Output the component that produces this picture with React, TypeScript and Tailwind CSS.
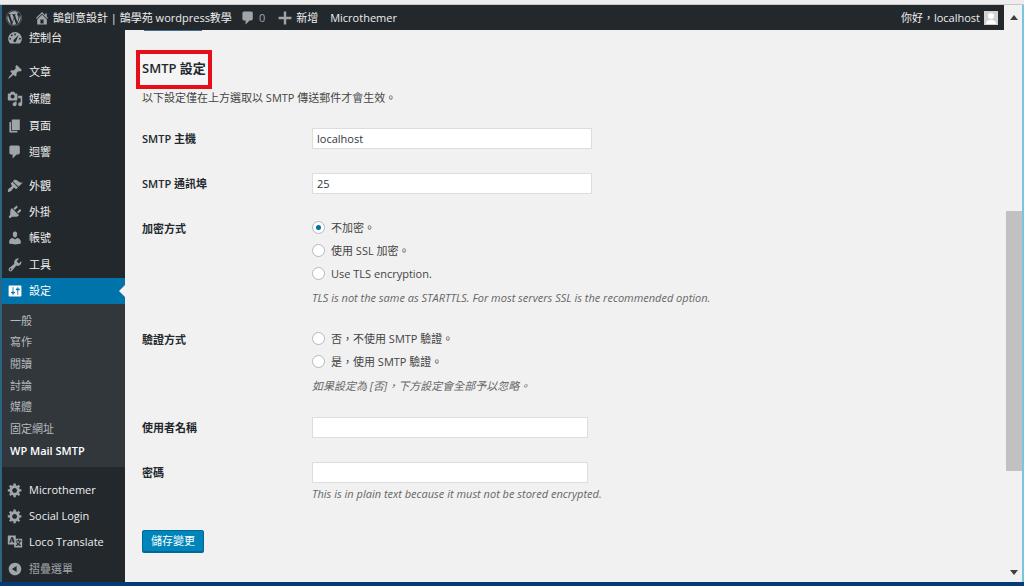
import { useState } from "react";
import type { ReactNode } from "react";
import { FaWordpress } from "react-icons/fa";

/* dashicons, 20x20 grid */
const ICONS = {
  dashboard:
    "M3.8 17h12.4A8.6 8.6 0 0 0 18.6 11 8.6 8.6 0 0 0 1.4 11a8.6 8.6 0 0 0 2.4 6zM9 4.5h2v2H9zM4.6 6.6l1.4-1.4 1.4 1.4L6 8zM3 10h2v2H3zM15 10h2v2h-2zM8.2 12.4l6.4-6-3.4 8a1.8 1.8 0 1 1-3-2z",
  home: "M16 8.5l1.53 1.53-1.06 1.06L10 4.6l-6.47 6.49-1.06-1.06L10 2.5l4 4v-2h2v4zm-6-2.46l6 5.99V18H4v-5.97zM12 17v-5H8v5h4z",
  post: "M10.44 3.02l1.82-1.82 6.36 6.35-1.83 1.82c-1.05-.68-2.48-.57-3.41.36l-.75.75c-.92.93-1.04 2.35-.35 3.41l-1.83 1.82-2.41-2.41-2.8 2.79c-.42.42-3.38 2.71-3.8 2.29s1.86-3.39 2.28-3.81l2.79-2.79L4.1 9.36l1.83-1.82c1.05.69 2.48.57 3.4-.36l.75-.75c.93-.92 1.05-2.35.36-3.41z",
  media:
    "M13 11V4c0-.55-.45-1-1-1h-1.67L9 1H5L3.67 3H2c-.55 0-1 .45-1 1v7c0 .55.45 1 1 1h10c.55 0 1-.45 1-1zM7 4.5c1.38 0 2.5 1.12 2.5 2.5S8.38 9.5 7 9.5 4.5 8.38 4.5 7 5.62 4.5 7 4.5zM14 6h5v10.5c0 1.38-1.12 2.5-2.5 2.5S14 17.88 14 16.5s1.12-2.5 2.5-2.5c.17 0 .34.02.5.05V9h-3V6zm-4 8.05V13h2v3.5c0 1.38-1.12 2.5-2.5 2.5S7 17.88 7 16.5 8.12 14 9.5 14c.17 0 .34.02.5.05z",
  page: "M6 15V2h10v13H6zm-1 1h8v2H3V5h2v11z",
  comments:
    "M5 2h9c1.1 0 2 .9 2 2v7c0 1.1-.9 2-2 2h-2l-5 5v-5H5c-1.1 0-2-.9-2-2V4c0-1.1.9-2 2-2z",
  appearance:
    "M14.48 11.06L7.41 3.99l1.5-1.5c.5-.56 2.3-.47 3.51.32 1.21.8 1.43 1.28 2.91 2.1 1.18.64 2.45 1.26 4.45.85zm-.71.71L6.7 4.7 4.93 6.47c-.39.39-.39 1.02 0 1.41l1.06 1.06c.39.39.39 1.03 0 1.42-.6.6-1.43 1.11-2.21 1.69-.35.26-.7.53-1.01.84C1.43 14.23.4 16.08 1.4 17.07c.99 1 2.84-.03 4.18-1.36.31-.31.58-.66.85-1.02.57-.78 1.08-1.61 1.69-2.21.39-.39 1.02-.39 1.41 0l1.06 1.06c.39.39 1.02.39 1.41 0z",
  plugins:
    "M13.11 4.36L9.87 7.6 8 5.73l3.24-3.24c.35-.34 1.05-.2 1.56.32.52.51.66 1.21.31 1.55zm-8 1.77l.91-1.12 9.01 9.01-1.19.84c-.71.71-2.63 1.16-3.82 1.16H6.14L4.9 17.26c-.59.59-1.54.59-2.12 0-.59-.58-.59-1.53 0-2.12l1.24-1.24v-3.88c0-1.13.4-3.19 1.09-3.89zm7.26 3.97l3.24-3.24c.34-.35 1.04-.21 1.55.31.52.51.66 1.21.31 1.55l-3.24 3.25z",
  users:
    "M10 9.25c-2.27 0-2.73-3.44-2.73-3.44C7 4.02 7.82 2 9.97 2c2.16 0 2.98 2.02 2.71 3.81 0 0-.41 3.44-2.68 3.44zm0 2.57L12.72 10c2.39 0 4.52 2.33 4.52 4.53v2.49s-3.65 1.13-7.24 1.13c-3.65 0-7.24-1.13-7.24-1.13v-2.49c0-2.25 1.94-4.48 4.47-4.48z",
  tools:
    "M16.68 9.77c-1.34 1.34-3.3 1.67-4.95.99l-5.41 6.52c-.99.99-2.59.99-3.58 0s-.99-2.59 0-3.57l6.52-5.42c-.68-1.65-.35-3.61.99-4.95 1.28-1.28 3.12-1.62 4.72-1.06l-2.89 2.89 2.82 2.82 2.86-2.87c.53 1.58.18 3.39-1.08 4.65zM3.81 16.21c.4.39 1.04.39 1.43 0 .4-.4.4-1.04 0-1.43-.39-.4-1.03-.4-1.43 0-.39.39-.39 1.03 0 1.43z",
  settings:
    "M18 16V4c0-.55-.45-1-1-1H3c-.55 0-1 .45-1 1v12c0 .55.45 1 1 1h14c.55 0 1-.45 1-1zM8 11h1c.55 0 1 .45 1 1s-.45 1-1 1H8v1.5c0 .28-.22.5-.5.5s-.5-.22-.5-.5V13H6c-.55 0-1-.45-1-1s.45-1 1-1h1V5.5c0-.28.22-.5.5-.5s.5.22.5.5V11zm5-2h-1c-.55 0-1-.45-1-1s.45-1 1-1h1V5.5c0-.28.22-.5.5-.5s.5.22.5.5V7h1c.55 0 1 .45 1 1s-.45 1-1 1h-1v5.5c0 .28-.22.5-.5.5s-.5-.22-.5-.5V9z",
  generic:
    "M18 12h-2.18c-.17.7-.44 1.35-.81 1.93l1.54 1.54-2.1 2.1-1.54-1.54c-.58.36-1.23.63-1.91.79V19H8v-2.18c-.68-.16-1.33-.43-1.91-.79l-1.54 1.54-2.12-2.12 1.54-1.54c-.36-.58-.63-1.23-.79-1.91H1V9.03h2.17c.16-.7.44-1.35.8-1.94L2.43 5.55l2.1-2.1 1.54 1.54c.58-.37 1.24-.64 1.93-.81V2h3v2.18c.68.16 1.33.43 1.91.79l1.54-1.54 2.12 2.12-1.54 1.54c.36.59.64 1.24.8 1.94H18V12zm-8.5 1.5c1.66 0 3-1.34 3-3s-1.34-3-3-3-3 1.34-3 3 1.34 3 3 3z",
  translate:
    "M1 2h10v4h8v11H9v-4H1zM5.3 4L2.8 11h1.5l.5-1.5h2.4L7.7 11H9V8L7.4 4zM6 6l.8 2.3H5.2zM11 8v1.4h4.6c-.3 1-.8 1.8-1.5 2.5-.5-.5-.9-1-1.2-1.6h-1.5c.4.9 1 1.7 1.7 2.4-.7.5-1.5.9-2.3 1.1l.7 1.3c1-.4 1.9-.9 2.7-1.5.8.6 1.7 1.1 2.7 1.4l.6-1.3c-.8-.2-1.6-.6-2.3-1.1.9-1 1.5-2.1 1.8-3.200H18V8h-2.700V7h-1.500v1z",
  collapse:
    "M10 2.16c4.33 0 7.84 3.51 7.84 7.84s-3.51 7.84-7.84 7.84S2.16 14.33 2.16 10 5.71 2.16 10 2.16zm2 11.72V6.12L6.18 9.97z",
  plus: "M8.5 2h3v6.5H18v3h-6.5V18h-3v-6.5H2v-3h6.5z",
};

type IconName = keyof typeof ICONS;
type Item = { icon: IconName; label: string };

const CONTENT: Item[] = [
  { icon: "post", label: "文章" },
  { icon: "media", label: "媒體" },
  { icon: "page", label: "頁面" },
  { icon: "comments", label: "迴響" },
];

const ADMIN: Item[] = [
  { icon: "appearance", label: "外觀" },
  { icon: "plugins", label: "外掛" },
  { icon: "users", label: "帳號" },
  { icon: "tools", label: "工具" },
  { icon: "settings", label: "設定" },
];

const EXTRA: Item[] = [
  { icon: "generic", label: "Microthemer" },
  { icon: "generic", label: "Social Login" },
  { icon: "translate", label: "Loco Translate" },
];

const SUBMENU = ["一般", "寫作", "閱讀", "討論", "媒體", "固定網址", "WP Mail SMTP"];

function Icon({ name, className = "" }: { name: IconName; className?: string }) {
  return (
    <svg
      viewBox="0 0 20 20"
      fill="currentColor"
      fillRule="evenodd"
      aria-hidden="true"
      className={`size-4 shrink-0 ${className}`}
    >
      <path d={ICONS[name]} />
    </svg>
  );
}

function MenuItem({ icon, label }: Item) {
  const current = label === "設定";
  return (
    <li className="flex flex-1">
      <a
        href="#"
        aria-current={current ? "page" : undefined}
        className={`relative flex flex-1 items-center gap-[6px] pl-[5px] ${
          current ? "bg-[#0073aa] text-white" : "text-[#eeeeee]"
        }`}
      >
        <Icon name={icon} className={current ? "text-white" : "text-[#a0a5aa]"} />
        {label}
        {current && (
          <span className="absolute right-0 top-1/2 -translate-y-1/2 border-y-[6px] border-r-[6px] border-y-transparent border-r-[#f1f1f1]" />
        )}
      </a>
    </li>
  );
}

function Sidebar() {
  return (
    <nav className="flex w-[123px] shrink-0 flex-col bg-[#23282d]">
      <ul className="mb-[14px] flex h-[15px]">
        <MenuItem icon="dashboard" label="控制台" />
      </ul>
      <ul className="flex h-[107px] flex-col">
        {CONTENT.map((item) => (
          <MenuItem key={item.label} {...item} />
        ))}
      </ul>
      <ul className="mt-[7px] flex h-[132px] flex-col">
        {ADMIN.map((item) => (
          <MenuItem key={item.label} {...item} />
        ))}
      </ul>
      <ul className="flex h-[164px] flex-col bg-[#32373c] py-[6px]">
        {SUBMENU.map((label) => (
          <li key={label} className="flex flex-1">
            <a
              href="#"
              className={`flex flex-1 items-center pl-2 ${
                label === "WP Mail SMTP" ? "font-semibold text-white" : "text-[#b4b9be]"
              }`}
            >
              {label}
            </a>
          </li>
        ))}
      </ul>
      <ul className="mt-[9px] flex h-[106px] flex-col">
        {EXTRA.map((item) => (
          <MenuItem key={item.label} {...item} />
        ))}
        <li className="flex flex-1">
          <button type="button" className="flex flex-1 items-center gap-[6px] pl-[5px] text-[#a0a5aa]">
            <Icon name="collapse" />
            摺疊選單
          </button>
        </li>
      </ul>
    </nav>
  );
}

function AdminBar() {
  return (
    <header className="flex h-[25px] shrink-0 items-center bg-[#23282d] pl-1 pr-[6px] text-[#eeeeee]">
      <a href="#" aria-label="WordPress" className="text-[#a0a5aa]">
        <FaWordpress className="size-4" />
      </a>
      <a href="#" className="ml-3 flex items-center gap-[3px]">
        <Icon name="home" className="text-[#a0a5aa]" />
        鵠創意設計 | 鵠學苑 wordpress教學
      </a>
      <a href="#" className="ml-2 flex items-center gap-[3px] text-[#a0a5aa]">
        <Icon name="comments" />0
      </a>
      <a href="#" className="ml-3 flex items-center gap-[3px]">
        <Icon name="plus" className="text-[#a0a5aa]" />
        新增
      </a>
      <a href="#" className="ml-3">
        Microthemer
      </a>
      <a href="#" className="ml-auto flex items-center gap-1">
        你好，localhost
        <svg viewBox="0 0 14 14" aria-hidden="true" className="size-[14px]">
          <rect width="14" height="14" fill="#d2d2d2" />
          <circle cx="7" cy="5" r="3" fill="#fff" />
          <path d="M2 13c0-3 2-4 5-4s5 1 5 4z" fill="#fff" />
        </svg>
      </a>
    </header>
  );
}

function Row({ label, htmlFor, children }: { label: string; htmlFor?: string; children: ReactNode }) {
  const labelClass = "w-[170px] shrink-0 leading-[25px] font-semibold text-[#23282d]";
  return (
    <div className="flex" role={htmlFor ? undefined : "radiogroup"} aria-label={htmlFor ? undefined : label}>
      {htmlFor ? (
        <label htmlFor={htmlFor} className={labelClass}>
          {label}
        </label>
      ) : (
        <span className={labelClass}>{label}</span>
      )}
      <div className="min-w-0 flex-1">{children}</div>
    </div>
  );
}

function TextField({ id, value, className }: { id: string; value: string; className: string }) {
  return (
    <div className="flex h-[25px] items-center">
      <input
        id={id}
        type="text"
        defaultValue={value}
        className={`h-[21px] border border-[#dddddd] bg-white px-1 text-[#32373c] outline-none ${className}`}
      />
    </div>
  );
}

function RadioList({ name, options, initial }: { name: string; options: string[]; initial?: string }) {
  const [picked, setPicked] = useState(initial);
  return (
    <>
      {options.map((option) => (
        <label key={option} className="flex h-[23px] items-center gap-[6px]">
          <input
            type="radio"
            name={name}
            checked={picked === option}
            onChange={() => setPicked(option)}
            className="grid size-[13px] shrink-0 appearance-none place-items-center rounded-full border border-[#b4b9be] bg-white checked:before:size-[5px] checked:before:rounded-full checked:before:bg-[#00709e] checked:before:content-['']"
          />
          {option}
        </label>
      ))}
    </>
  );
}

function Hint({ children }: { children: ReactNode }) {
  return <p className="leading-[18px] italic text-[#666666]">{children}</p>;
}

function SettingsForm() {
  return (
    <main className="min-w-0 flex-1 bg-[#f1f1f1] pl-[11px] text-[#444444]">
      <div className="ml-2 h-px w-[58px] bg-[#3f6f8f]" />
      <h2 className="mt-[19px] flex h-[39px] w-fit items-center border-4 border-[#e60f19] bg-[#f5f5f5] px-[2px] pb-1 text-[13px] font-semibold text-[#23282d]">
        SMTP 設定
      </h2>
      <form className="pl-[6px]" onSubmit={(e) => e.preventDefault()}>
        <p className="leading-[17px]">以下設定僅在上方選取以 SMTP 傳送郵件才會生效。</p>
        <div className="mt-5 flex flex-col gap-5">
          <Row label="SMTP 主機" htmlFor="host">
            <TextField id="host" value="localhost" className="w-[280px]" />
          </Row>
          <Row label="SMTP 通訊埠" htmlFor="port">
            <TextField id="port" value="25" className="w-[280px]" />
          </Row>
          <Row label="加密方式">
            <RadioList
              name="ssl"
              initial="不加密。"
              options={["不加密。", "使用 SSL 加密。", "Use TLS encryption."]}
            />
            <div className="mt-1">
              <Hint>TLS is not the same as STARTTLS. For most servers SSL is the recommended option.</Hint>
            </div>
          </Row>
          <Row label="驗證方式">
            <RadioList name="auth" options={["否，不使用 SMTP 驗證。", "是，使用 SMTP 驗證。"]} />
            <div className="mt-1">
              <Hint>如果設定為 [否]，下方設定會全部予以忽略。</Hint>
            </div>
          </Row>
          <Row label="使用者名稱" htmlFor="user">
            <TextField id="user" value="" className="w-[276px]" />
          </Row>
          <Row label="密碼" htmlFor="pass">
            <TextField id="pass" value="" className="w-[276px]" />
            <Hint>This is in plain text because it must not be stored encrypted.</Hint>
          </Row>
        </div>
        <button
          type="submit"
          className="mt-[27px] h-[22px] rounded-[2px] border border-[#006799] bg-[#0085ba] px-2 leading-[18px] text-white shadow-[0_1px_0_#006799]"
        >
          儲存變更
        </button>
      </form>
    </main>
  );
}

function Scrollbar() {
  return (
    <div className="flex w-[18px] shrink-0 flex-col items-end bg-[#f1f1f1]" aria-hidden="true">
      <div className="flex h-[25px] w-4 items-center justify-center">
        <span className="border-x-4 border-b-[5px] border-x-transparent border-b-[#404040]" />
      </div>
      <div className="flex w-4 flex-1 flex-col">
        <div className="flex-[181]" />
        <div className="flex-[260] bg-[#c1c1c1]" />
        <div className="flex-[92]" />
      </div>
      <div className="flex h-[19px] w-4 items-center justify-center">
        <span className="border-x-4 border-t-[5px] border-x-transparent border-t-[#404040]" />
      </div>
    </div>
  );
}

export default function App() {
  return (
    <div
      lang="zh-Hant"
      className="flex h-screen flex-col overflow-hidden bg-[#f1f1f1] font-['Open_Sans','Noto_Sans_CJK_TC',sans-serif] text-[11px] leading-4"
    >
      <div className="h-[5px] shrink-0 border-b border-[#c8c8c8] bg-[#ededed]" />
      <div className="flex min-h-0 flex-1 border-l-2 border-r-2 border-l-[#2a6584] border-r-[#7cc3de]">
        <div className="flex min-w-0 flex-1 flex-col">
          <AdminBar />
          <div className="flex min-h-0 flex-1">
            <Sidebar />
            <SettingsForm />
          </div>
        </div>
        <Scrollbar />
      </div>
      <div className="h-1 shrink-0 bg-[#043a75]" />
    </div>
  );
}
